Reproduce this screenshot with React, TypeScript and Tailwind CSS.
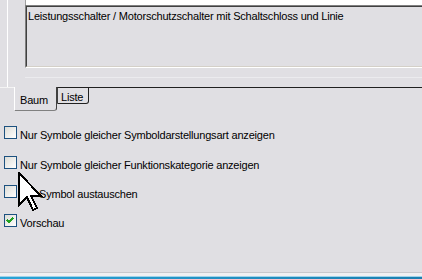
import React from "react";

type Option = { label: string; checked: boolean; indent?: boolean };

const options: Option[] = [
  { label: "Nur Symbole gleicher Symboldarstellungsart anzeigen", checked: false },
  { label: "Nur Symbole gleicher Funktionskategorie anzeigen", checked: false },
  { label: "Symbol austauschen", checked: false, indent: true },
  { label: "Vorschau", checked: true },
];

function CheckBox({ checked }: { checked: boolean }) {
  return (
    <div className="w-[13px] h-[13px] shrink-0 border border-[#1c5180] bg-gradient-to-br from-[#dcdcd7] to-white flex items-center justify-center">
      {checked && (
        <svg width="9" height="9" viewBox="0 0 9 9" shapeRendering="crispEdges">
          <path d="M1 4 L3 6 L7 2" stroke="#21a121" strokeWidth="2" fill="none" />
        </svg>
      )}
    </div>
  );
}

function Cursor() {
  return (
    <svg
      className="absolute left-[18px] top-[172px]"
      width="26"
      height="42"
      viewBox="0 0 13 21"
      shapeRendering="crispEdges"
    >
      <polygon
        points="0.5,0.5 0.5,16.5 4.5,12.5 7.5,19 9.5,18 6.5,12 11.5,12"
        fill="white"
        stroke="black"
        strokeWidth="1"
      />
    </svg>
  );
}

export default function App() {
  return (
    <div
      className="relative w-[422px] h-[279px] bg-[#e0dfe3] overflow-hidden flex flex-col text-[11px] leading-[13px] tracking-[-0.2px] text-black"
      style={{ fontFamily: '"Liberation Sans", Arial, sans-serif' }}
    >
      {/* description panel */}
      <div className="flex h-[87px]">
        <div className="w-[7px]" />
        <div className="w-[18px] border-l border-white" />
        <div className="flex-1 flex flex-col">
          <div className="h-[5px] bg-white border-l border-[#a0a0a0]" />
          <div className="h-[63px] border-t border-l border-[#808080] border-b border-b-white">
            <div className="h-full border-t border-l border-[#404040] border-b border-b-[#d4d0c8] px-[1px] pt-[3px]">
              Leistungsschalter / Motorschutzschalter mit Schaltschloss und Linie
            </div>
          </div>
          <div className="h-[10px] border-b border-[#ebebee]" />
        </div>
      </div>

      {/* tabs */}
      <div className="flex h-[25px]">
        <div className="w-[14px] border-t border-[#f4f4f4]" />
        <div className="w-[43px] h-[24px] border-l border-white border-b border-b-[#808080] border-r border-r-[#404040] rounded-br-[3px] pl-[5px] pt-[7px]">
          Baum
        </div>
        <div className="w-[32px] h-[17px] border border-[#202020] border-l-[#404040] rounded-br-[3px] pl-[3px] pt-[3px]">
          Liste
        </div>
        <div className="flex-1 border-t border-[#202020]" />
      </div>

      {/* options */}
      <div className="flex flex-col pl-[4px] pt-[14px]">
        {options.map((o, i) => (
          <div key={o.label} className={`flex items-start gap-[3px] ${i === 0 ? "h-[30px]" : "h-[29px]"}`}>
            <CheckBox checked={o.checked} />
            <span className={o.indent ? "mt-[3px] ml-[19px]" : "mt-[3px]"}>{o.label}</span>
          </div>
        ))}
      </div>

      <div className="flex-1" />

      {/* taskbar edge */}
      <div className="flex flex-col">
        <div className="h-[1px] bg-[#c8c8cc]" />
        <div className="h-[3px] bg-[#f0f0f2]" />
        <div className="h-[1px] bg-[#9fd3ea]" />
        <div className="h-[2px] bg-gradient-to-r from-[#2aa3d6] to-[#1b7fb0]" />
      </div>

      <Cursor />
    </div>
  );
}
